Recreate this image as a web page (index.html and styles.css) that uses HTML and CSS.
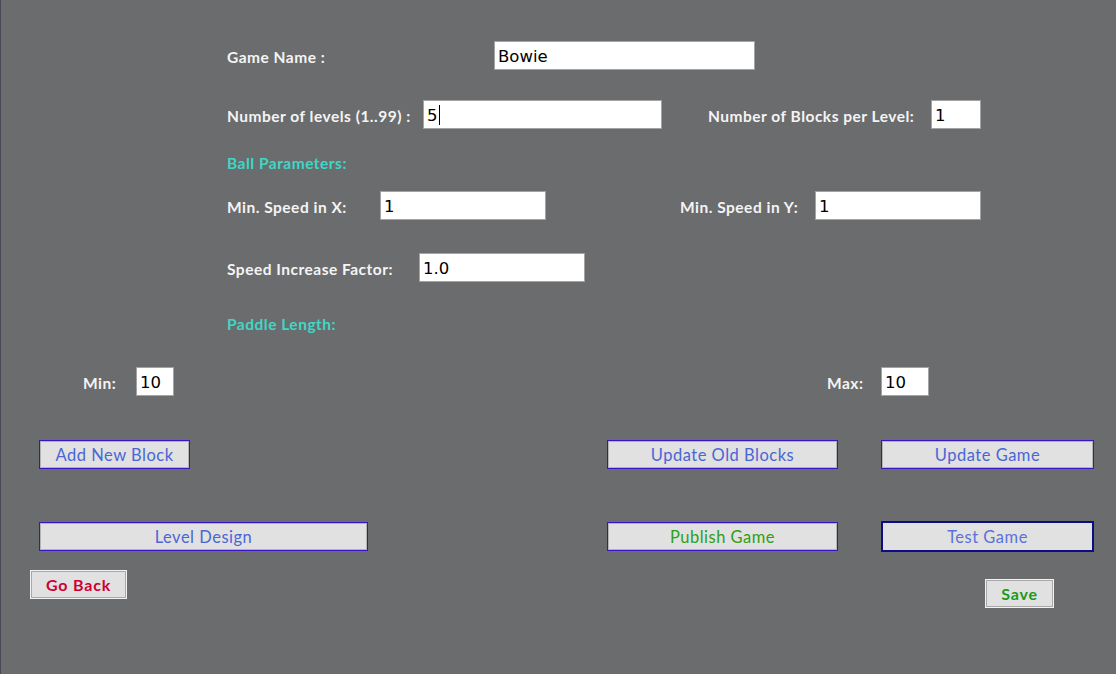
FILE: index.html
```html
<!DOCTYPE html>
<html>
<head>
<meta charset="utf-8">
<link rel="stylesheet" href="styles.css">
</head>
<body>
<div class="page">
  <div class="row r1 indent">
    <span class="label w-name">Game Name :</span>
    <div class="field w261">Bowie</div>
  </div>

  <div class="row r2 indent">
    <span class="label w-levels">Number of levels (1..99) :</span>
    <div class="field w239">5<span class="caret"></span></div>
    <span class="label w-blocks">Number of Blocks per Level:</span>
    <div class="field w50">1</div>
  </div>

  <div class="section r3 indent">Ball Parameters:</div>

  <div class="row r4 indent">
    <span class="label w-minx">Min. Speed in X:</span>
    <div class="field w166">1</div>
    <span class="label w-miny">Min. Speed in Y:</span>
    <div class="field w166">1</div>
  </div>

  <div class="row r5 indent">
    <span class="label w-factor">Speed Increase Factor:</span>
    <div class="field w166">1.0</div>
  </div>

  <div class="section r6 indent">Paddle Length:</div>

  <div class="row r7">
    <span class="label w-min">Min:</span>
    <div class="field w38">10</div>
    <span class="label w-max">Max:</span>
    <div class="field w48">10</div>
  </div>

  <div class="row r8 btnrow">
    <button class="btn w151">Add New Block</button>
    <button class="btn w231 gap-a">Update Old Blocks</button>
    <button class="btn w213 gap-b">Update Game</button>
  </div>

  <div class="row r9 btnrow">
    <button class="btn w329">Level Design</button>
    <button class="btn w231 gap-c green">Publish Game</button>
    <button class="btn w213 gap-b test">Test Game</button>
  </div>

  <div class="row r10 bottom">
    <button class="plain back">Go Back</button>
    <button class="plain save">Save</button>
  </div>
</div>
</body>
</html>
```

FILE: styles.css
```css
* { box-sizing: border-box; }

html, body {
  margin: 0;
  padding: 0;
  background: #6b6c6e;
}

body {
  width: 1116px;
  height: 674px;
  overflow: hidden;
  font-family: Lato, "DejaVu Sans", sans-serif;
}

.page {
  padding-top: 41px;
  border-left: 1px solid #454a55;
  min-height: 674px;
}

.row {
  display: flex;
  align-items: center;
  height: 29px;
}

.indent { padding-left: 226px; }

.label {
  color: #f4f4f4;
  font-weight: 700;
  font-size: 15.5px;
  letter-spacing: 0.5px;
  white-space: nowrap;
  padding-top: 3px;
}

.section {
  color: #3fd6c6;
  font-weight: 700;
  font-size: 15.5px;
  letter-spacing: 0.5px;
  height: 20px;
  line-height: 20px;
}

.field {
  height: 29px;
  background: #ffffff;
  border: 1px solid #a3a3a3;
  font-family: "DejaVu Sans", sans-serif;
  font-size: 16.5px;
  color: #000;
  line-height: 27px;
  padding-left: 3px;
  padding-top: 1px;
  display: flex;
  align-items: center;
}

.caret {
  display: inline-block;
  width: 1px;
  height: 20px;
  background: #000;
  margin-left: 1px;
}

.w261 { width: 261px; }
.w239 { width: 239px; }
.w50 { width: 50px; }
.w166 { width: 166px; }
.w38 { width: 38px; }
.w48 { width: 48px; }

.w-name { width: 267px; }
.w-levels { width: 196px; }
.w-blocks { width: 223px; margin-left: 46px; }
.w-minx { width: 153px; }
.w-miny { width: 135px; margin-left: 134px; }
.w-factor { width: 192px; }
.w-min { width: 53px; margin-left: 82px; }
.w-max { width: 54px; margin-left: 653px; }

.r2 { margin-top: 30px; }
.r3 { margin-top: 24px; }
.r4 { margin-top: 18px; }
.r5 { margin-top: 33px; }
.r6 { margin-top: 32px; }
.r7 { margin-top: 33px; }
.r8 { margin-top: 44px; }
.r9 { margin-top: 53px; }

.btnrow { padding-left: 38px; }

.btn {
  height: 29px;
  margin: 0;
  padding: 0;
  background: #e1e1e1;
  border: 1px solid #3a12c8;
  box-shadow: inset 0 0 0 1px #b4b4b4;
  color: #4a66d6;
  font-family: Lato, "DejaVu Sans", sans-serif;
  font-size: 16.5px;
  letter-spacing: 0.5px;
  font-weight: 400;
}

.w151 { width: 151px; }
.w231 { width: 231px; }
.w213 { width: 213px; }
.w329 { width: 329px; }

.gap-a { margin-left: 417px; }
.gap-b { margin-left: 43px; }
.gap-c { margin-left: 239px; }

.green { color: #2f9f12; }

.test {
  height: 31px;
  border: 2px solid #0c0c86;
  box-shadow: none;
  color: #5a72d8;
}

.bottom {
  margin-top: 19px;
  padding-left: 29px;
  align-items: flex-start;
}

.plain {
  height: 29px;
  margin: 0;
  padding: 0;
  background: #e1e1e1;
  border: 1px solid #f2f2f2;
  box-shadow: inset 0 0 0 1px #a8a8a8;
  font-family: Lato, "DejaVu Sans", sans-serif;
  font-size: 16px;
  letter-spacing: 0.8px;
  font-weight: 700;
}

.back {
  width: 97px;
  color: #cc0033;
}

.save {
  width: 69px;
  margin-top: 9px;
  margin-left: 858px;
  color: #1a9a16;
}
```
